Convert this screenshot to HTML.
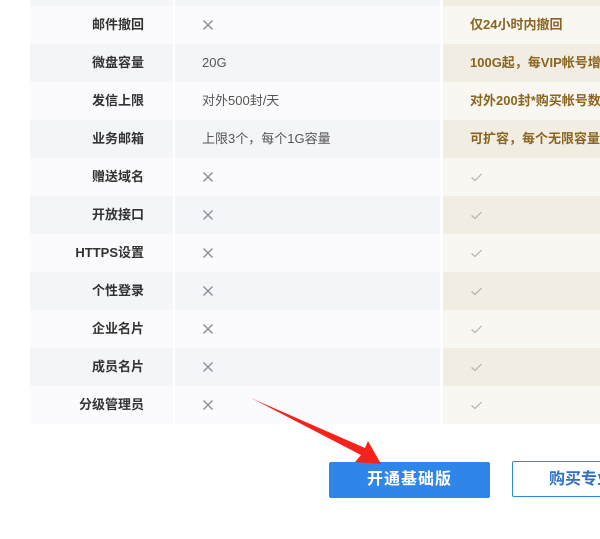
<!DOCTYPE html>
<html><head><meta charset="utf-8"><style>
body{margin:0;width:600px;height:539px;background:#fff;position:relative;overflow:hidden;font-family:"Liberation Sans","Noto Sans CJK SC",sans-serif;font-size:13px}
.r{position:absolute;left:30px;width:570px;height:38px}
.c{position:absolute;top:0;height:38px;line-height:38px}
.a{left:0;width:143px;text-align:right;padding-right:29px;box-sizing:border-box;font-weight:bold;color:#333;font-size:13px}
.b{left:145px;width:265px;padding-left:27px;box-sizing:border-box;color:#555}
.d{left:413px;width:157px;padding-left:27px;box-sizing:border-box;color:#8a6420;font-weight:bold;white-space:nowrap;overflow:hidden}
.o .a,.o .b{background:#fbfbfd}.o .d{background:#f9f7f1}
.e .a,.e .b{background:#f4f5f9}.e .d{background:#f1ede2}
.c svg{position:absolute;top:13px}
.btn{position:absolute;top:462px;left:329px;width:161px;height:36px;background:#2f86e8;border-radius:2px;color:#fff;font-size:16px;font-weight:bold;text-align:center;line-height:36px;letter-spacing:1px}
.btn2{position:absolute;top:461px;left:512px;width:120px;height:36px;border:1px solid #2f86e8;border-radius:2px;color:#2f6fc8;font-size:16px;font-weight:bold;line-height:36px;padding-left:36px;box-sizing:border-box}
</style></head><body>
<svg width="0" height="0" style="position:absolute"><defs>
<symbol id="x" viewBox="0 0 12 12"><path d="M1.5 1.5L10.5 10.5M10.5 1.5L1.5 10.5" stroke="#8c8f96" stroke-width="1.4" fill="none"/></symbol>
<symbol id="k" viewBox="0 0 12 12"><path d="M1 6.5L4.5 9.5L11 3" stroke="#b5b2aa" stroke-width="1.2" fill="none"/></symbol>
</defs></svg>
<div class="r e" style="top:-32px"><div class="c a"></div><div class="c b"></div><div class="c d"></div></div>
<div class="r o" style="top:6px"><div class="c a">邮件撤回</div><div class="c b"><svg width="12" height="12" style="left:27px"><use href="#x"/></svg></div><div class="c d">仅24小时内撤回</div></div>
<div class="r e" style="top:44px"><div class="c a">微盘容量</div><div class="c b">20G</div><div class="c d">100G起，每VIP帐号增加</div></div>
<div class="r o" style="top:82px"><div class="c a">发信上限</div><div class="c b">对外500封/天</div><div class="c d">对外200封*购买帐号数/天</div></div>
<div class="r e" style="top:120px"><div class="c a">业务邮箱</div><div class="c b">上限3个，每个1G容量</div><div class="c d">可扩容，每个无限容量</div></div>
<div class="r o" style="top:158px"><div class="c a">赠送域名</div><div class="c b"><svg width="12" height="12" style="left:27px"><use href="#x"/></svg></div><div class="c d"><svg width="13" height="12" style="left:27px"><use href="#k"/></svg></div></div>
<div class="r e" style="top:196px"><div class="c a">开放接口</div><div class="c b"><svg width="12" height="12" style="left:27px"><use href="#x"/></svg></div><div class="c d"><svg width="13" height="12" style="left:27px"><use href="#k"/></svg></div></div>
<div class="r o" style="top:234px"><div class="c a">HTTPS设置</div><div class="c b"><svg width="12" height="12" style="left:27px"><use href="#x"/></svg></div><div class="c d"><svg width="13" height="12" style="left:27px"><use href="#k"/></svg></div></div>
<div class="r e" style="top:272px"><div class="c a">个性登录</div><div class="c b"><svg width="12" height="12" style="left:27px"><use href="#x"/></svg></div><div class="c d"><svg width="13" height="12" style="left:27px"><use href="#k"/></svg></div></div>
<div class="r o" style="top:310px"><div class="c a">企业名片</div><div class="c b"><svg width="12" height="12" style="left:27px"><use href="#x"/></svg></div><div class="c d"><svg width="13" height="12" style="left:27px"><use href="#k"/></svg></div></div>
<div class="r e" style="top:348px"><div class="c a">成员名片</div><div class="c b"><svg width="12" height="12" style="left:27px"><use href="#x"/></svg></div><div class="c d"><svg width="13" height="12" style="left:27px"><use href="#k"/></svg></div></div>
<div class="r o" style="top:386px"><div class="c a">分级管理员</div><div class="c b"><svg width="12" height="12" style="left:27px"><use href="#x"/></svg></div><div class="c d"><svg width="13" height="12" style="left:27px"><use href="#k"/></svg></div></div>
<div class="btn">开通基础版</div>
<div class="btn2">购买专业版</div>
<svg style="position:absolute;left:0;top:0" width="600" height="539"><polygon points="251,398 365,448 368,441 381,464 355,462 361,455" fill="#f5231c"/></svg>
</body></html>
